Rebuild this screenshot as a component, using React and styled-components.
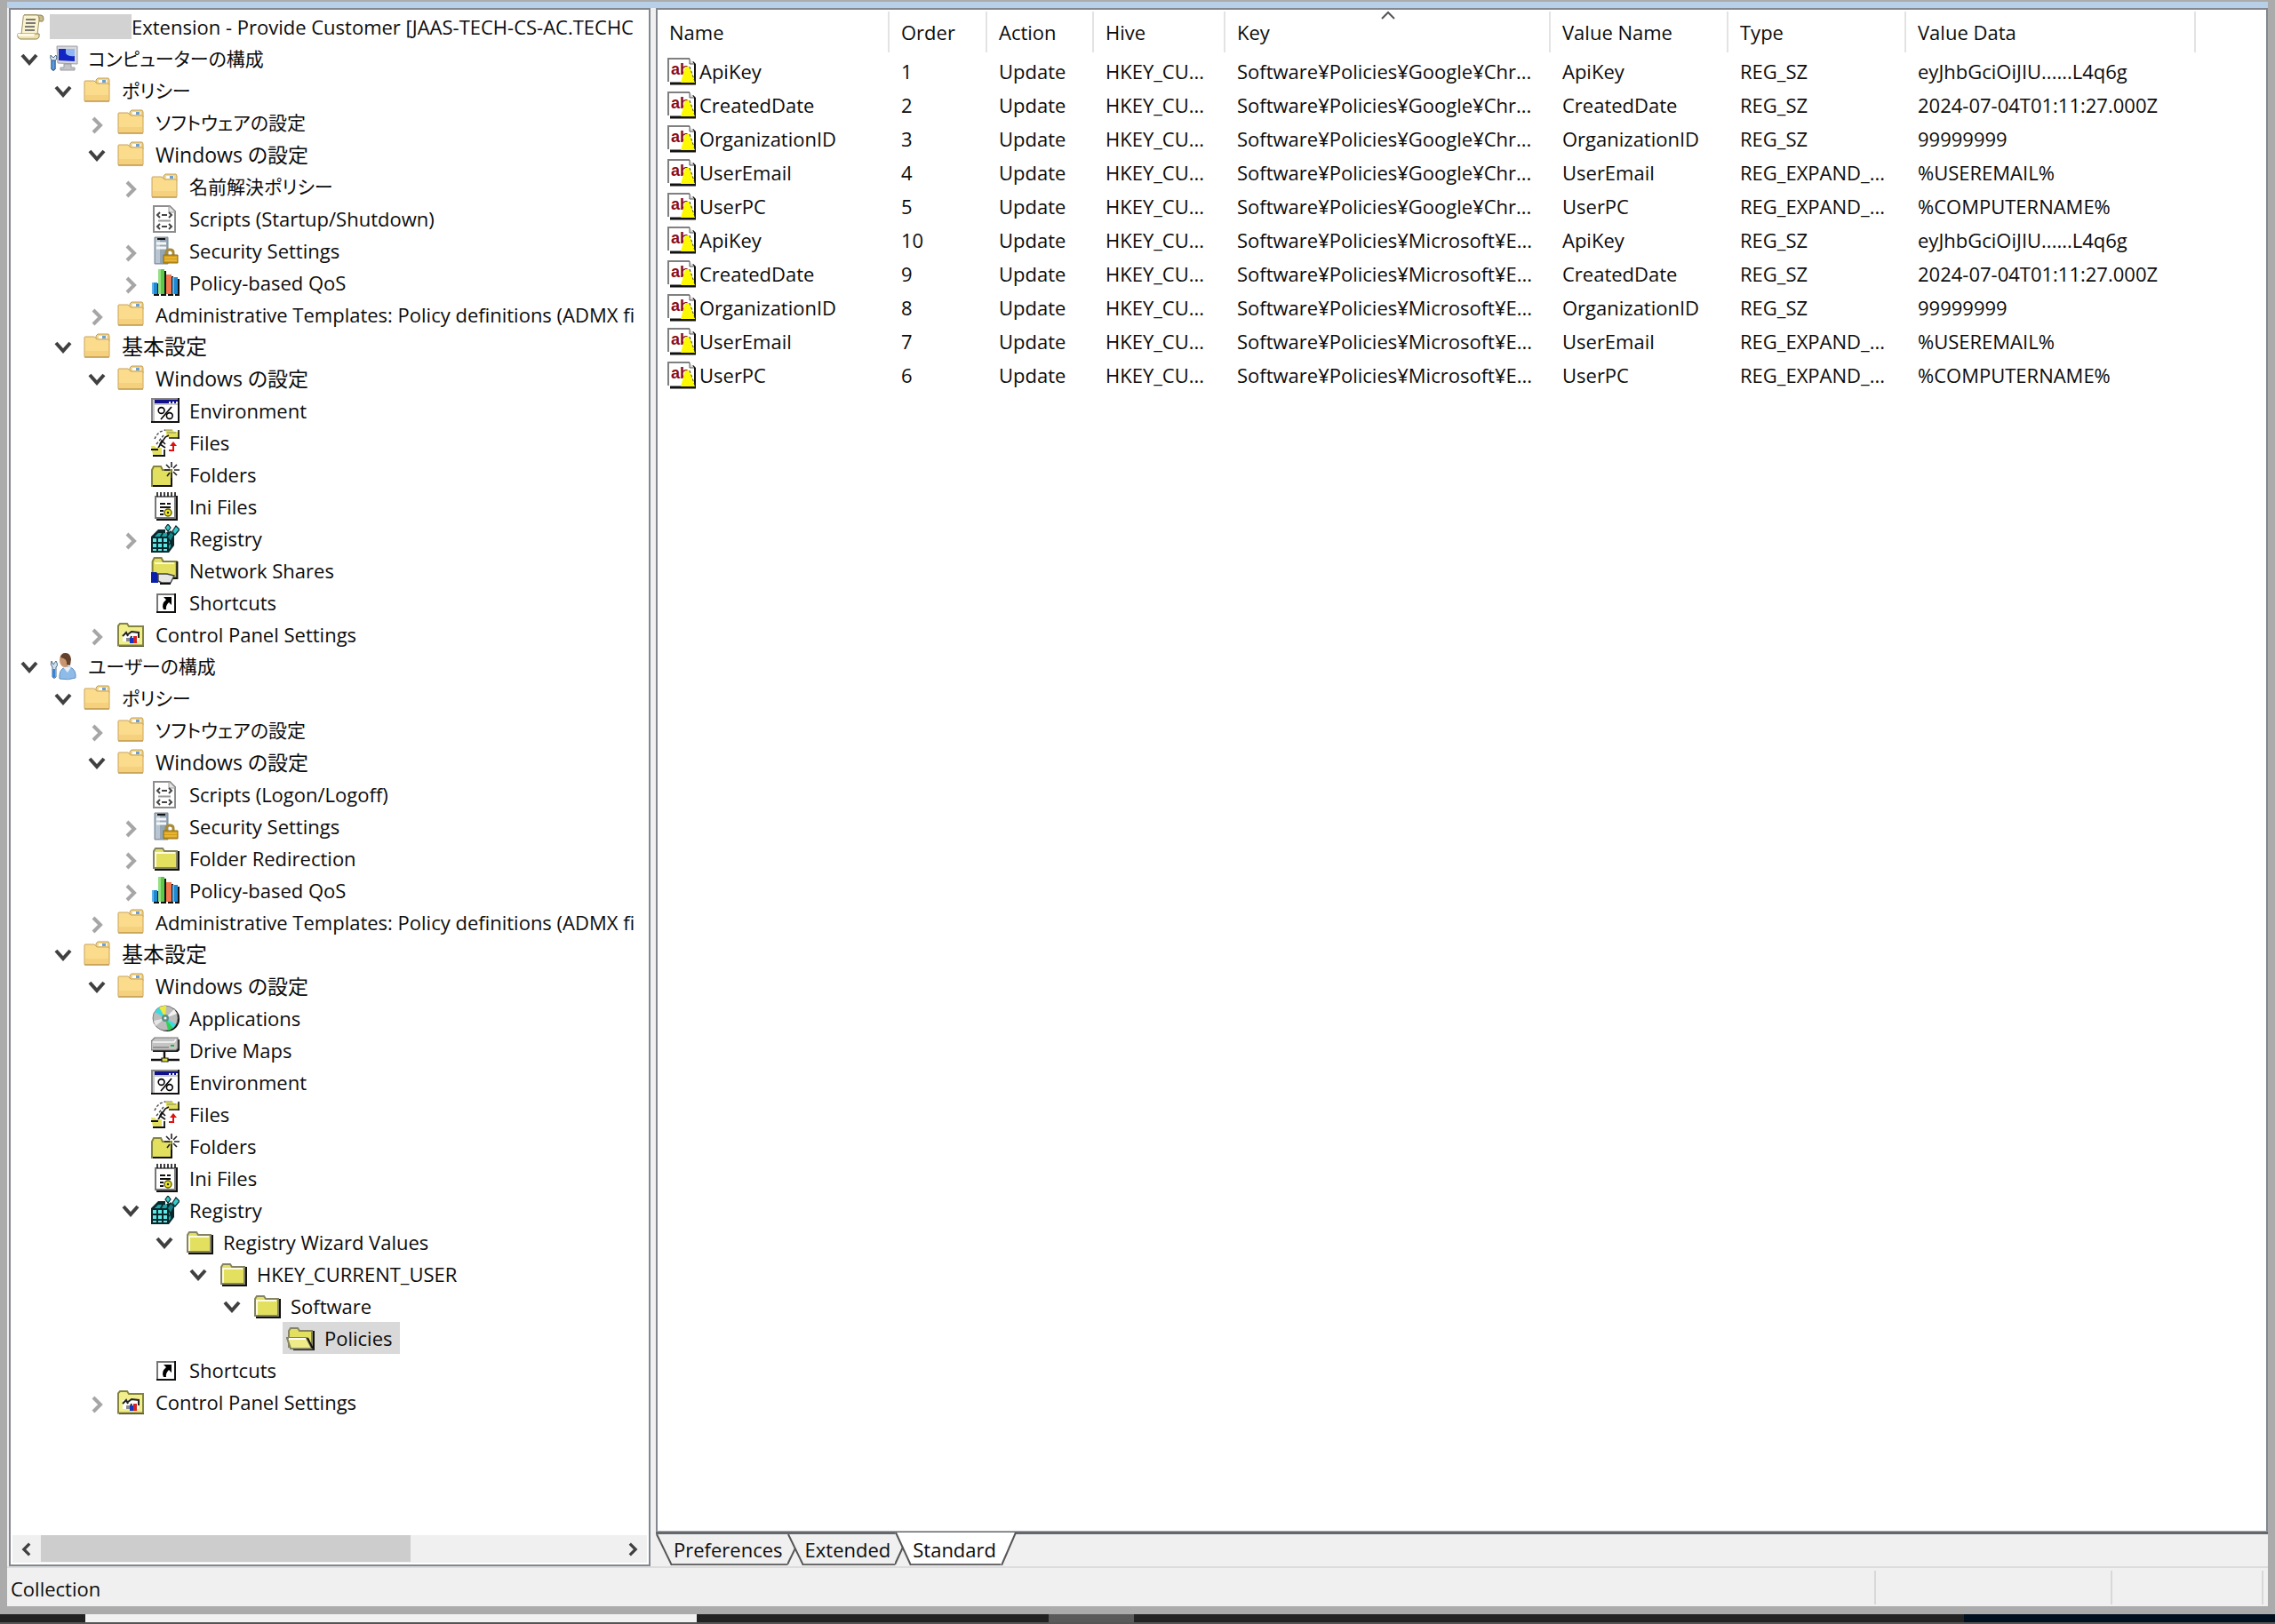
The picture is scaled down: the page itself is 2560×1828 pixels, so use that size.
import React, { useState } from 'react'
import styled, { createGlobalStyle, css } from 'styled-components'

const INDENT = 38
const ROW_HEIGHT = 36

const frameColor = '#ababab'
const faceColor = '#f0f0f0'
const borderColor = '#828790'
const textColor = '#0c0c0c'

const GlobalStyle = createGlobalStyle`
    * {
        box-sizing: border-box;
    }
    body {
        margin: 0;
        background: ${frameColor};
        color: ${textColor};
        font-family: "Open Sans", "Noto Sans CJK JP", sans-serif;
        font-size: 22px;
        line-height: 36px;
    }
    button {
        margin: 0;
        padding: 0;
        border: 0;
        background: none;
        color: inherit;
        font: inherit;
        text-align: left;
    }
`

/* ---------- icons ---------- */

const IconSvg = styled.svg`
    display: block;
    flex: none;
    width: 32px;
    height: 32px;
`

const Icon16 = ({ children }) => <IconSvg viewBox="0 0 16 16" aria-hidden="true">{children}</IconSvg>
const Icon32 = ({ children }) => <IconSvg viewBox="0 0 32 32" aria-hidden="true">{children}</IconSvg>

const ScrollIcon = () => (
    <Icon32>
        <path d="M9 3h19q3 0 3 4t-3 3h-2V6q0-3-3-3z" fill="#c9bb8d" stroke="#8f8157" />
        <path d="M9 3h15q2 1 2 5l-2 17H6L8 7q0-3 1-4z" fill="#fbf3cf" stroke="#a39565" />
        <path d="M2 24q-1 5 3 6h18q4-1 3-6z" fill="#efe2ac" stroke="#8f8157" />
        <path d="M2 24q-1 3 2 3h16l1-3z" fill="#fdf9e6" />
        <path d="M11 8h11M11 12h11M10 16h11M10 20h11" stroke="#7c7a74" strokeWidth="2" />
    </Icon32>
)

const ComputerIcon = () => (
    <Icon32>
        <path d="M8 2h23v20l-22-1z" fill="#d7d8dc" stroke="#9a9ca3" />
        <path d="M10 5h18v14l-18-1z" fill="#1226c4" />
        <path d="M18 5h10v8q-7 1-10-3z" fill="#8fb6f2" />
        <path d="M16 22h8v4h4v3H12v-3h4z" fill="#c3c4c8" stroke="#9b9ca2" />
        <path d="M1 12l3 3 3-3q2 5-1 6v10q-2 3-4 0V18q-2-2-1-6z" fill="#d9e6f0" stroke="#47677f" />
        <path d="M2 18h4v10q-2 2-4 0z" fill="#5c9be0" stroke="#2f5f8f" />
    </Icon32>
)

const UserIcon = () => (
    <Icon32>
        <path d="M11 30q-1-10 6-13h6q7 3 6 12-8 3-18 1z" fill="#8fbbe8" stroke="#5f8fc0" />
        <path d="M15 17l5 6 4-6z" fill="#e7f1fb" />
        <ellipse cx="17" cy="9" rx="6" ry="8" fill="#c99470" />
        <path d="M12 6q1-5 6-5t6 7l-1 7-4-1q1-7-7-8z" fill="#64422a" />
        <path d="M2 10l2 4 3-4q3 5 0 7v11q-2 3-4 0V17q-3-3-1-7z" fill="#cfe0ee" stroke="#4c6d85" />
        <path d="M3 19h3v9q-1 2-3 0z" fill="#3a84d8" />
    </Icon32>
)

const FolderIcon = () => (
    <Icon32>
        <path d="M14 4l2-2h12l1 2v6H14z" fill="#f0d68e" stroke="#c49d4f" />
        <path d="M17 4h9v3h-9z" fill="#fff" />
        <path d="M21 4h4v3h-4z" fill="#6aa0d8" />
        <path d="M1 6q0-1 1-1h10l3 3h12q2 0 2 1v18q0 1-1 1H2q-1 0-1-1z" fill="#fbdc8d" stroke="#c9a258" />
        <path d="M2 21h26v6H2z" fill="#f5d17e" />
        <path d="M1 28h28" stroke="#b58c42" />
    </Icon32>
)

const ScriptIcon = () => (
    <Icon32>
        <path d="M3 2h18l6 6v23H3z" fill="#fff" stroke="#8d8d8d" strokeWidth="2" />
        <path d="M20 2v7h7" fill="#e6e6e6" stroke="#9c9c9c" />
        <path d="M10 9l-3 3 3 3M20 9l3 3-3 3M12 12h6M10 22l-3 3 3 3M20 22l3 3-3 3M12 25h6" fill="none" stroke="#444" strokeWidth="2" />
        <path d="M8 18.500h14" stroke="#999" strokeWidth="2" />
    </Icon32>
)

const SecurityIcon = () => (
    <Icon32>
        <path d="M4 1h15v30H4z" fill="#94a5b4" stroke="#7b8b99" />
        <path d="M5 2h5v28H5z" fill="#b9c6d1" />
        <path d="M7 3h9" stroke="#111" strokeWidth="2" />
        <path d="M6 8h11M6 13h11" stroke="#f5f8fa" strokeWidth="3" />
        <path d="M17 22v-4q0-3 4-3t4 3v4" fill="none" stroke="#a88a35" strokeWidth="3" />
        <path d="M14 21h16v9H14z" fill="#d49c16" stroke="#8f6b12" />
        <path d="M15 24h14M15 27h14" stroke="#f5cf5d" />
    </Icon32>
)

const QosIcon = () => (
    <Icon32>
        <path d="M3 17h6v14H3zM11 3h6v28h-6zM19 9h6v22h-6zM27 12h5v19h-5z" fill="#111" />
        <path d="M1 16h6v13H1z" fill="#1e88d2" />
        <path d="M8 1h7v28H8z" fill="#5cc845" />
        <path d="M17 7h6v22h-6z" fill="#f4764d" />
        <path d="M24 10h6v19h-6z" fill="#1e88d2" />
        <path d="M1 16h2v13H1zM24 10h2v19h-2z" fill="#5fb4ec" />
        <path d="M8 1h3v28H8z" fill="#94e082" />
    </Icon32>
)

const EnvironmentIcon = () => (
    <Icon16>
        <path d="M0 1h16v14H0z" fill="#111" />
        <path d="M0 1h15v13H0z" fill="#858585" />
        <path d="M1 2h14v12H1z" fill="#c9c9c9" />
        <path d="M2 2h13v2H2z" fill="#10108a" />
        <path d="M10 3h1v1h-1zM12 3h1v1h-1zM14 3h1v1h-1z" fill="#fff" />
        <path d="M2 5h13v9H2z" fill="#fff" />
        <g fill="none" stroke="#000" strokeWidth=".8">
            <ellipse cx="5.800" cy="8" rx="1.700" ry="1.700" />
            <ellipse cx="10.400" cy="11" rx="1.700" ry="1.700" />
            <path d="M11.500 6l-6 7" />
        </g>
    </Icon16>
)

const FilesIcon = () => (
    <Icon16>
        <path d="M8 1h4l1 1h3v3H9z" fill="#e3df5f" />
        <path d="M15.500 1v5M10 5.500h6" stroke="#111" strokeWidth=".8" fill="none" />
        <path d="M8 1h4M9 2.500h5" stroke="#8c8c5a" strokeWidth=".6" fill="none" />
        <path d="M2 6l1-2 2-2 3-1M3 9l4-5" stroke="#444" strokeWidth=".7" strokeDasharray="1.500 1" fill="none" />
        <path d="M4 11l4-6 2-1M8 9L6 7l-1 2 3 2" stroke="#111" strokeWidth=".8" fill="none" />
        <path d="M0 10h2l1 1h3v4H1z" fill="#e3df5f" />
        <path d="M1 15.500h7M7.500 12v3M0 12h4" stroke="#111" strokeWidth=".9" fill="none" />
        <path d="M12.500 9v3.500H10" stroke="#e01010" fill="none" />
        <path d="M10.500 10l2-2.500 2 2.500z" fill="#e01010" />
    </Icon16>
)

const NewFolderIcon = () => (
    <Icon16>
        <path d="M.5 14.500v-9l1-2h4l1 2h5v9z" fill="#e3df5f" stroke="#84843c" />
        <path d="M1 14.500h10.500V10" stroke="#111" fill="none" />
        <path d="M11.500 1v3M11.500 7v3M7.500 5.500h3M13 5.500h3M8.500 2.500l2 2M14.500 2.500l-2 2M9 9l1.500-2M14.500 8.500l-2-2" stroke="#222" strokeWidth=".8" />
    </Icon16>
)

const IniIcon = () => (
    <Icon16>
        <path d="M3 2h12v14H3z" fill="#111" />
        <path d="M2.500 2.500h11v12h-11z" fill="#fff" stroke="#777" />
        <path d="M3.500 0v2.500M5.500 0v2.500M7.500 0v2.500M9.500 0v2.500M11.500 0v2.500M13.500 0v2.500" stroke="#111" strokeWidth=".8" />
        <path d="M5 6.500h3M9 6.500h2M5 8.500h6M5 10.500h2M5 12.500h2" stroke="#111" strokeWidth=".9" />
        <circle cx="9.500" cy="11.500" r="2" fill="#efe822" stroke="#5b5b10" strokeWidth=".7" />
        <circle cx="9.500" cy="11.500" r=".6" fill="#222" />
    </Icon16>
)

const RegistryIcon = () => (
    <Icon16>
        <path d="M0 15V7l4-4h4v2l2-1 3 2v6l-3 4H0z" fill="#08282c" />
        <path d="M1 8h2v2H1zM4 8h2v2H4zM7 8h2v2H7zM1 11h2v2H1zM4 11h2v2H4zM7 11h2v2H7zM1 14h2v1H1zM4 14h2v1H4zM7 14h2v1H7z" fill="#5fe6e6" />
        <path d="M2 7l2-2h2L5 7zM6 7l1-2h2v2zM10 8l1-1v3l-1 1zM10 12l1-1v2l-1 1z" fill="#1aa5a8" />
        <path d="M8 2l1.500-2L11 2 9.500 4zM12 4l2-3 2 2-2.500 3z" fill="#35cccc" stroke="#08282c" strokeWidth=".6" />
        <path d="M9 7l2-3 2 2-2 4z" fill="#158487" stroke="#08282c" strokeWidth=".7" />
    </Icon16>
)

const ShareIcon = () => (
    <Icon16>
        <path d="M.8 12V3l1-2h4l1 2h7.500v9z" fill="#e3df5f" stroke="#84843c" />
        <path d="M14.700 3v9.500H9" stroke="#111" fill="none" />
        <path d="M2 4h11" stroke="#fbfad0" />
        <path d="M0 9h3l1 1v5H0z" fill="#0a1ea8" />
        <path d="M4 10h5l4 1-2 4H6l-2-1z" fill="#e6e6e6" stroke="#444" strokeWidth=".7" />
        <path d="M5 15.500h6" stroke="#111" />
    </Icon16>
)

const ShortcutIcon = () => (
    <Icon16>
        <path d="M3 3h11v11H3z" fill="#111" />
        <path d="M3 3h10v10H3z" fill="#777" />
        <path d="M4 4h9v9H4z" fill="#fff" />
        <path d="M7 5h4.500v4.500L10 8Q8 10 8.500 12H7Q5.500 9 8.500 6.500z" fill="#000" />
    </Icon16>
)

const ControlPanelIcon = () => (
    <Icon16>
        <path d="M1 15V4h14v11z" fill="#111" />
        <path d="M.5 14.200v-11L1.500 2h4l1 1.500h8v10.700z" fill="#f1ee8c" stroke="#84843c" />
        <path d="M3 7h9v5H3z" fill="#fff" />
        <path d="M3 9l2-2 1 2M6 8l2-1.500 4 .5v3M7 12l1-3" stroke="#222" fill="none" />
        <path d="M5 10h2v2H5z" fill="#888" />
        <path d="M7 10h2v3H7z" fill="#1434c4" />
        <path d="M9 9h2v4H9z" fill="#d82222" />
    </Icon16>
)

const YellowFolderIcon = () => (
    <Icon16>
        <path d="M2 4h14v11H2z" fill="#111" />
        <path d="M1.500 13.500V4l1-1.500h4l1 1.500h7v9.500z" fill="#e3df5f" stroke="#848464" />
        <path d="M2.500 13V5h11" stroke="#fdfce0" fill="none" />
    </Icon16>
)

const OpenFolderIcon = () => (
    <Icon16>
        <path d="M3 4h13v11H4z" fill="#111" />
        <path d="M1.500 13V4l1-1.500h4l1 1.500h7v9z" fill="#e3df5f" stroke="#848464" />
        <path d="M.5 8h11l3 6h-12z" fill="#efeb88" stroke="#848464" />
        <path d="M1.500 8.500h9.500" stroke="#fff" />
        <path d="M12 8l3 6" stroke="#111" />
    </Icon16>
)

const DiscIcon = () => (
    <Icon32>
        <circle cx="18" cy="17" r="14" fill="#111" />
        <circle cx="16" cy="16" r="14" fill="#bcbcbc" stroke="#7d7d7d" />
        <path d="M16 16L9 4q4-2 8-2z" fill="#eee83c" />
        <path d="M16 16L4 9l5-5z" fill="#38dce0" />
        <path d="M16 16l9 11-6 3z" fill="#2fd158" />
        <path d="M16 16l12 7-3 4z" fill="#38dce0" />
        <path d="M16 16L26 6l3 5z" fill="#f3f3f3" />
        <path d="M16 16L5 25l-2-6z" fill="#e5e5e5" />
        <circle cx="16" cy="16" r="4" fill="#5d8e86" />
        <circle cx="16" cy="16" r="1.500" fill="#fff" />
    </Icon32>
)

const DriveIcon = () => (
    <Icon16>
        <path d="M1 3l2-1h13v6l-1 1H1z" fill="#111" />
        <path d="M0 3l2-2h13v6l-1 1H0z" fill="#c4c4c4" stroke="#777" strokeWidth=".6" />
        <path d="M1 6.500h9" stroke="#8a8a8a" strokeWidth=".8" />
        <path d="M1 3.500h12l1-1.500" stroke="#f7f7f7" strokeWidth=".8" fill="none" />
        <path d="M11 5h2v1h-2z" fill="#20b530" />
        <path d="M7.500 9v4M0 13.500h16" stroke="#111" strokeWidth="1.200" />
        <path d="M6 12.500h3.500v2H6z" fill="#e3df3c" stroke="#222" strokeWidth=".6" />
    </Icon16>
)

const AbText = styled.text`
    font-family: "Liberation Sans", sans-serif;
    font-size: 18px;
    font-weight: bold;
    fill: #8c0a14;
`

const RegStringIcon = () => (
    <Icon32>
        <path d="M3 30h28V9l-3-3" fill="none" stroke="#111" strokeWidth="3" />
        <path d="M1 2h24l5 6v20H1z" fill="#fff" />
        <path d="M1 28V2h24" fill="none" stroke="#808080" strokeWidth="2" />
        <path d="M25 2v6h5" fill="#ddd" stroke="#555" />
        <AbText x="4" y="20">ab</AbText>
        <path d="M20 11h5l6 18H15z" fill="#fdf902" />
        <path d="M25 11l6 17" stroke="#333" strokeDasharray="3 2" />
    </Icon32>
)

const icons = {
    scroll: ScrollIcon,
    computer: ComputerIcon,
    user: UserIcon,
    folder: FolderIcon,
    script: ScriptIcon,
    security: SecurityIcon,
    qos: QosIcon,
    environment: EnvironmentIcon,
    files: FilesIcon,
    newFolder: NewFolderIcon,
    ini: IniIcon,
    registry: RegistryIcon,
    share: ShareIcon,
    shortcut: ShortcutIcon,
    control: ControlPanelIcon,
    yellow: YellowFolderIcon,
    open: OpenFolderIcon,
    disc: DiscIcon,
    drive: DriveIcon,
}

/* ---------- data ---------- */

const node = (icon, label, children, closed = false) => ({ icon, label, children, closed })
const closedNode = (icon, label) => node(icon, label, [], true)

const tree = [
    node('computer', 'コンピューターの構成', [
        node('folder', 'ポリシー', [
            closedNode('folder', 'ソフトウェアの設定'),
            node('folder', 'Windows の設定', [
                closedNode('folder', '名前解決ポリシー'),
                node('script', 'Scripts (Startup/Shutdown)'),
                closedNode('security', 'Security Settings'),
                closedNode('qos', 'Policy-based QoS'),
            ]),
            closedNode('folder', 'Administrative Templates: Policy definitions (ADMX fi'),
        ]),
        node('folder', '基本設定', [
            node('folder', 'Windows の設定', [
                node('environment', 'Environment'),
                node('files', 'Files'),
                node('newFolder', 'Folders'),
                node('ini', 'Ini Files'),
                closedNode('registry', 'Registry'),
                node('share', 'Network Shares'),
                node('shortcut', 'Shortcuts'),
            ]),
            closedNode('control', 'Control Panel Settings'),
        ]),
    ]),
    node('user', 'ユーザーの構成', [
        node('folder', 'ポリシー', [
            closedNode('folder', 'ソフトウェアの設定'),
            node('folder', 'Windows の設定', [
                node('script', 'Scripts (Logon/Logoff)'),
                closedNode('security', 'Security Settings'),
                closedNode('yellow', 'Folder Redirection'),
                closedNode('qos', 'Policy-based QoS'),
            ]),
            closedNode('folder', 'Administrative Templates: Policy definitions (ADMX fi'),
        ]),
        node('folder', '基本設定', [
            node('folder', 'Windows の設定', [
                node('disc', 'Applications'),
                node('drive', 'Drive Maps'),
                node('environment', 'Environment'),
                node('files', 'Files'),
                node('newFolder', 'Folders'),
                node('ini', 'Ini Files'),
                node('registry', 'Registry', [
                    node('yellow', 'Registry Wizard Values', [
                        node('yellow', 'HKEY_CURRENT_USER', [
                            node('yellow', 'Software', [
                                node('open', 'Policies'),
                            ]),
                        ]),
                    ]),
                ]),
                node('shortcut', 'Shortcuts'),
            ]),
            closedNode('control', 'Control Panel Settings'),
        ]),
    ]),
]

const columns = [
    { title: 'Name', width: 261 },
    { title: 'Order', width: 110 },
    { title: 'Action', width: 120 },
    { title: 'Hive', width: 148 },
    { title: 'Key', width: 366, sorted: true },
    { title: 'Value Name', width: 200 },
    { title: 'Type', width: 200 },
    { title: 'Value Data', width: 326 },
]

const chromeKey = 'Software¥Policies¥Google¥Chr...'
const edgeKey = 'Software¥Policies¥Microsoft¥E...'
const values = {
    ApiKey: ['REG_SZ', 'eyJhbGciOiJIU......L4q6g'],
    CreatedDate: ['REG_SZ', '2024-07-04T01:11:27.000Z'],
    OrganizationID: ['REG_SZ', '99999999'],
    UserEmail: ['REG_EXPAND_...', '%USEREMAIL%'],
    UserPC: ['REG_EXPAND_...', '%COMPUTERNAME%'],
}
const names = Object.keys(values)
const rows = [
    ...names.map((name, i) => ({ name, order: i + 1, key: chromeKey })),
    ...names.map((name, i) => ({ name, order: 10 - i, key: edgeKey })),
]

/* ---------- window ---------- */

const Desktop = styled.div`
    display: flex;
    flex-direction: column;
    min-height: 100vh;
    padding-top: 2px;
`

const Window = styled.main`
    flex: 1;
    display: flex;
    flex-direction: column;
    margin: 0 8px 9px;
    background: ${faceColor};
`

const TitleEdge = styled.div`
    height: 7px;
    background: #b7cfe7;
`

const Panes = styled.div`
    flex: 1;
    display: flex;
    gap: 6px;
    padding-left: 2px;
`

const TreePane = styled.nav`
    flex: 0 0 722px;
    min-width: 0;
    display: flex;
    flex-direction: column;
    padding: 1px 2px 2px;
    border: 2px solid ${borderColor};
    background: #fff;
`

const TreeArea = styled.div`
    flex: 1;
    overflow: hidden;
    white-space: nowrap;
`

const RootRow = styled.div`
    display: flex;
    align-items: center;
    gap: 6px;
    height: ${ROW_HEIGHT}px;
    padding-left: 4px;
`

const Redacted = styled.span`
    flex: none;
    width: 92px;
    height: 28px;
    background: #d2d2d2;
`

const RootLabel = styled.span`
    margin-left: -6px;
`

const TreeList = styled.ul`
    margin: 0;
    padding: 0 0 0 ${props => props.$nested ? INDENT : 3}px;
    list-style: none;
`

const TreeRow = styled.div`
    display: flex;
    align-items: center;
    gap: 3px;
    height: ${ROW_HEIGHT}px;
`

const Toggle = styled.button`
    flex: none;
    display: grid;
    place-items: center;
    width: 32px;
    height: ${ROW_HEIGHT}px;
    padding-top: ${props => props.$open ? 2 : 6}px;
`

const Gutter = styled.span`
    flex: none;
    width: 32px;
`

const TreeItem = styled.button`
    display: flex;
    align-items: center;
    gap: 11px;
    height: ${ROW_HEIGHT}px;
    padding: 0 8px 0 4px;
    white-space: nowrap;
    background: ${props => props.$selected ? '#d9d9d9' : 'transparent'};
`

const TreeLabel = styled.span`
    font-size: ${props => props.$size}px;
    font-feature-settings: ${props => props.$size === 22 ? 'normal' : '"palt"'};
`

const Arrow = ({ direction, size = 20, color = '#404040', width = 3 }) => {
    const shapes = {
        down: 'M2 5l8 9 8-9',
        right: 'M6 2l8 8-8 8',
        left: 'M14 2l-8 8 8 8',
    }
    return (
        <svg width={size} height={size} viewBox="0 0 20 20" aria-hidden="true">
            <path d={shapes[direction]} fill="none" stroke={color} strokeWidth={width} />
        </svg>
    )
}

const labelSize = text => {
    if (/[\u30a0-\u30ff]/.test(text)) return 21
    if (/^[\u4e00-\u9fff]+$/.test(text)) return 24
    return /[\u3040-\u9fff]/.test(text) ? 23 : 22
}

function TreeNode({ item, selected, onSelect, path }) {
    const [open, setOpen] = useState(!item.closed)
    const Icon = icons[item.icon]

    return (
        <li>
            <TreeRow>
                {item.children ? (
                    <Toggle $open={open} aria-label={item.label} aria-expanded={open} onClick={() => setOpen(!open)}>
                        <Arrow direction={open ? 'down' : 'right'} color={open ? '#404040' : '#a6a6a6'} width={4} />
                    </Toggle>
                ) : <Gutter />}
                <TreeItem $selected={selected === path} onClick={() => onSelect(path)}>
                    <Icon />
                    <TreeLabel $size={labelSize(item.label)}>{item.label}</TreeLabel>
                </TreeItem>
            </TreeRow>
            {open && item.children && (
                <TreeList $nested>
                    {item.children.map(child => (
                        <TreeNode
                            key={child.label}
                            item={child}
                            path={`${path}/${child.label}`}
                            selected={selected}
                            onSelect={onSelect}
                        />
                    ))}
                </TreeList>
            )}
        </li>
    )
}

const ScrollBar = styled.div`
    display: flex;
    height: 31px;
    background: ${faceColor};
`

const ScrollButton = styled.button`
    flex: none;
    display: grid;
    place-items: center;
    width: 32px;
`

const ScrollTrack = styled.div`
    flex: 1;
`

const ScrollThumb = styled.div`
    width: 64%;
    height: 30px;
    background: #cdcdcd;
`

/* ---------- list ---------- */

const ListPane = styled.section`
    flex: 1;
    min-width: 0;
    display: flex;
    flex-direction: column;
`

const ListArea = styled.div`
    flex: 1;
    overflow: hidden;
    border: 2px solid ${borderColor};
    border-bottom: 1px solid #abadb3;
    background: #fff;
`

const Table = styled.table`
    width: 100%;
    table-layout: fixed;
    border-collapse: collapse;
`

const HeadCell = styled.th`
    position: relative;
    height: 50px;
    padding: 0 0 0 13px;
    font-weight: normal;
    text-align: left;
    background: linear-gradient(#e3e3e3, #e3e3e3) no-repeat right 0 top 2px / 2px 46px;
`

const SortMark = styled.svg`
    position: absolute;
    top: 1px;
    left: 50%;
    width: 16px;
    height: 10px;
    margin-left: -8px;
`

const Cell = styled.td`
    height: 38px;
    padding: 0 0 0 13px;
    overflow: hidden;
    white-space: nowrap;
`

const NameCell = styled(Cell)`
    padding-left: 11px;
`

const NameContent = styled.span`
    display: flex;
    align-items: center;
    gap: 4px;
`

const Tabs = styled.div`
    display: flex;
    height: 39px;
    border-top: 3px solid #64676b;
`

const Tab = styled.button`
    display: flex;
    height: ${props => props.$active ? 37 : 35}px;
    margin-top: ${props => props.$active ? -2 : 0}px;
`

const TabLabel = styled.span`
    padding: 0 5px 0 2px;
    line-height: 34px;
    border-bottom: 2px solid #6b6b6b;
    background: ${props => props.$active ? '#fff' : faceColor};
    ${props => props.$active && css`
        padding-top: 2px;
    `}
`

const TabEdge = styled.svg`
    display: block;
    width: 18px;
    height: 100%;
`

const TabStart = ({ active, first }) => (
    <TabEdge viewBox="0 0 18 36" preserveAspectRatio="none" aria-hidden="true">
        {active && <path d="M0 0h18v36z" fill="#fff" />}
        <path d="M1 0l17 36" stroke="#555" strokeWidth="2" />
        {!first && <path d="M0 35l9-19" stroke="#555" strokeWidth="2" />}
    </TabEdge>
)

const TabEnd = () => (
    <TabEdge viewBox="0 0 18 36" preserveAspectRatio="none" aria-hidden="true">
        <path d="M0 0h17L0 36z" fill="#fff" />
        <path d="M17 0L1 36" stroke="#555" strokeWidth="2" />
    </TabEdge>
)

const StatusBar = styled.footer`
    display: flex;
    height: 45px;
    padding-right: 5px;
    border-top: 2px solid #dcdcdc;
`

const StatusCell = styled.div`
    flex: ${props => props.$width ? `0 0 ${props.$width}px` : 1};
    margin: 3px 0 2px;
    padding-left: 4px;
    line-height: 40px;
    border-right: 2px solid #d8d8d8;
`

const Taskbar = styled.div`
    display: flex;
    height: 11px;
    border-bottom: 2px solid #555;
`

const TaskbarPart = styled.span`
    flex: ${props => props.$share};
    background: ${props => props.$color};
`

const tabNames = ['Preferences', 'Extended', 'Standard']

const taskbar = [
    [96, '#222'],
    [688, '#f2f2f2'],
    [396, '#222'],
    [96, '#5a5a5a'],
    [934, '#232323'],
    [350, '#00101f'],
]

function App() {
    const [selected, setSelected] = useState(
        '/ユーザーの構成/基本設定/Windows の設定/Registry/Registry Wizard Values/HKEY_CURRENT_USER/Software/Policies'
    )
    const [tab, setTab] = useState('Standard')

    return (
        <Desktop>
            <GlobalStyle />
            <Window>
                <TitleEdge />
                <Panes>
                    <TreePane>
                        <TreeArea>
                            <RootRow>
                                <ScrollIcon />
                                <Redacted />
                                <RootLabel>Extension - Provide Customer [JAAS-TECH-CS-AC.TECHC</RootLabel>
                            </RootRow>
                            <TreeList>
                                {tree.map(item => (
                                    <TreeNode
                                        key={item.label}
                                        item={item}
                                        path={`/${item.label}`}
                                        selected={selected}
                                        onSelect={setSelected}
                                    />
                                ))}
                            </TreeList>
                        </TreeArea>
                        <ScrollBar>
                            <ScrollButton aria-label="Scroll left">
                                <Arrow direction="left" size={16} width={4} />
                            </ScrollButton>
                            <ScrollTrack>
                                <ScrollThumb />
                            </ScrollTrack>
                            <ScrollButton aria-label="Scroll right">
                                <Arrow direction="right" size={16} width={4} />
                            </ScrollButton>
                        </ScrollBar>
                    </TreePane>
                    <ListPane>
                        <ListArea>
                            <Table>
                                <colgroup>
                                    {columns.map(({ title, width }) => <col key={title} width={width} />)}
                                    <col />
                                </colgroup>
                                <thead>
                                    <tr>
                                        {columns.map(({ title, sorted }) => (
                                            <HeadCell key={title} scope="col" aria-sort={sorted ? 'ascending' : undefined}>
                                                {title}
                                                {sorted && (
                                                    <SortMark viewBox="0 0 16 10" aria-hidden="true">
                                                        <path d="M1 9l7-7 7 7" fill="none" stroke="#555" strokeWidth="2" />
                                                    </SortMark>
                                                )}
                                            </HeadCell>
                                        ))}
                                        <td />
                                    </tr>
                                </thead>
                                <tbody>
                                    {rows.map(({ name, order, key }) => (
                                        <tr key={order}>
                                            <NameCell>
                                                <NameContent>
                                                    <RegStringIcon />
                                                    {name}
                                                </NameContent>
                                            </NameCell>
                                            <Cell>{order}</Cell>
                                            <Cell>Update</Cell>
                                            <Cell>HKEY_CU...</Cell>
                                            <Cell>{key}</Cell>
                                            <Cell>{name}</Cell>
                                            <Cell>{values[name][0]}</Cell>
                                            <Cell>{values[name][1]}</Cell>
                                            <td />
                                        </tr>
                                    ))}
                                </tbody>
                            </Table>
                        </ListArea>
                        <Tabs role="tablist">
                            {tabNames.map((name, i) => (
                                <Tab
                                    key={name}
                                    role="tab"
                                    aria-selected={tab === name}
                                    $active={tab === name}
                                    onClick={() => setTab(name)}
                                >
                                    <TabStart active={tab === name} first={i === 0} />
                                    <TabLabel $active={tab === name}>{name}</TabLabel>
                                    {i === tabNames.length - 1 && <TabEnd />}
                                </Tab>
                            ))}
                        </Tabs>
                    </ListPane>
                </Panes>
                <StatusBar>
                    <StatusCell>Collection</StatusCell>
                    <StatusCell $width={266} />
                    <StatusCell $width={170} />
                </StatusBar>
            </Window>
            <Taskbar>
                {taskbar.map(([share, color], i) => <TaskbarPart key={i} $share={share} $color={color} />)}
            </Taskbar>
        </Desktop>
    )
}

export default App
